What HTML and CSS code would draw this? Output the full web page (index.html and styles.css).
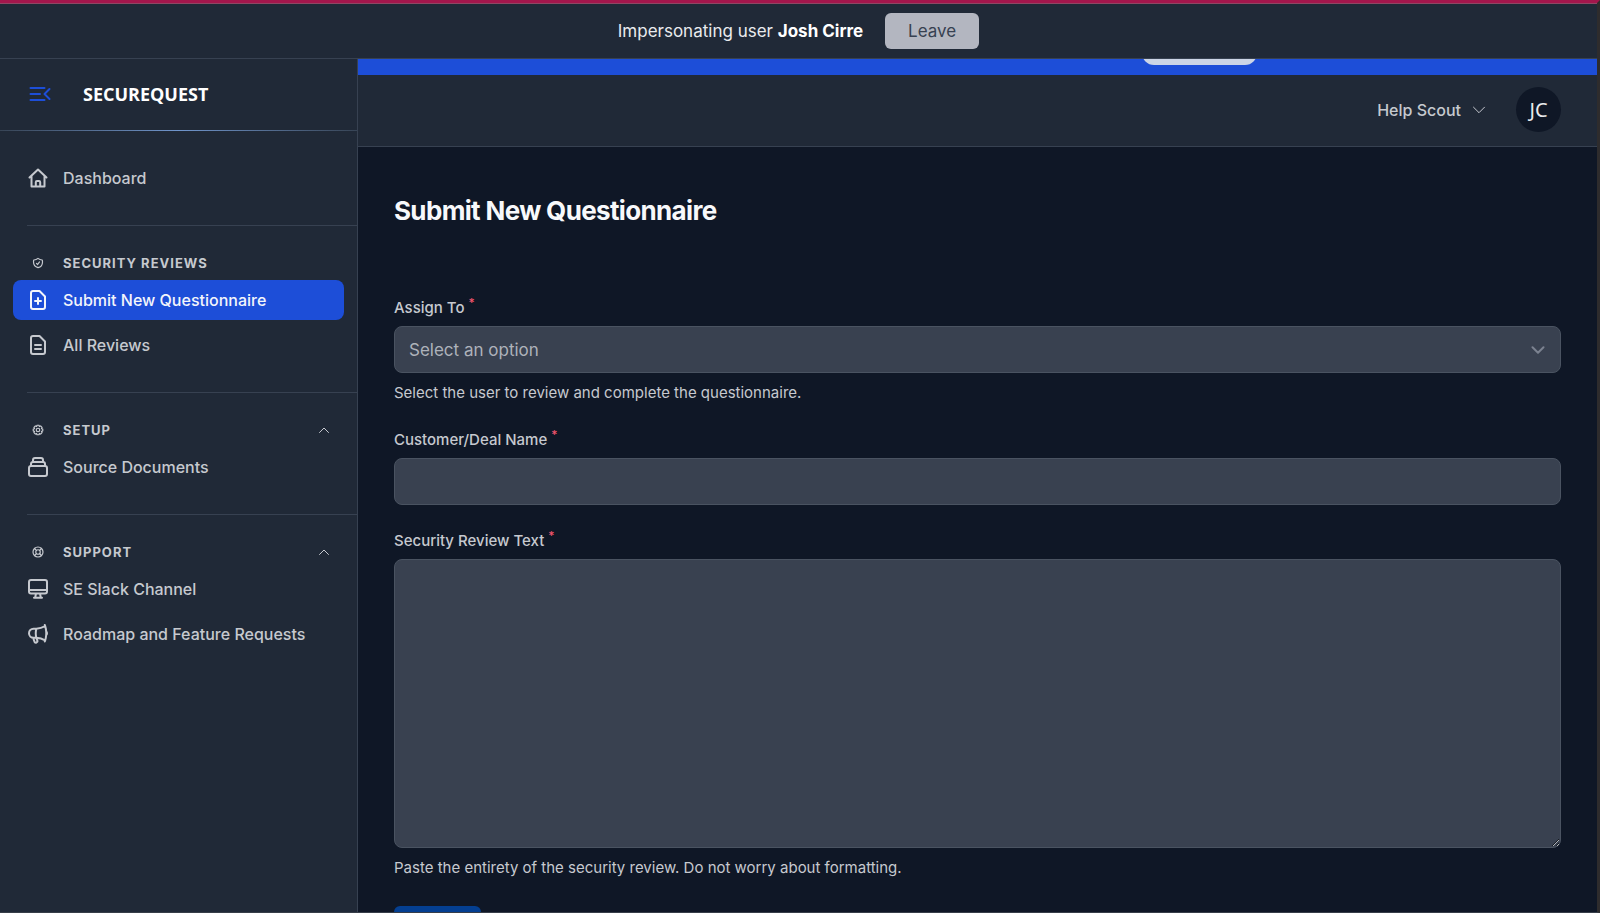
FILE: index.html
```html
<!DOCTYPE html>
<html lang="en">
<head>
<meta charset="utf-8">
<title>SecureQuest - Submit New Questionnaire</title>
<link rel="stylesheet" href="styles.css">
</head>
<body>
<div class="app">
  <div class="impersonation">
    <p class="impersonation-text">Impersonating user <strong>Josh Cirre</strong></p>
    <button type="button" class="leave-button">Leave</button>
  </div>
  <div class="shell">
    <aside class="sidebar">
      <div class="brand">
        <button type="button" class="collapse-button" aria-label="Collapse sidebar">
          <svg class="icon-menu" viewBox="0 0 22 16"><path d="M1.500 2H15.500M1.500 8H11M1.500 14H15.500M20.500 3L15.500 8l5 5"/></svg>
        </button>
        <span class="brand-name">SECUREQUEST</span>
      </div>
      <nav class="nav">
        <div class="nav-group">
          <a href="#" class="nav-item">
            <svg class="icon" viewBox="0 0 20 20"><path d="M1.500 9.500L10 1.500l8.500 8M3.500 8v10.500h13V8M7.800 18.500v-4.300a1.200 1.200 0 0 1 1.200-1.200h2a1.200 1.200 0 0 1 1.200 1.200v4.300"/></svg>
            Dashboard</a>
        </div>
        <div class="nav-group">
          <h2 class="nav-heading">
            <svg class="icon-small" viewBox="0 0 24 24"><path d="M9 12.750 11.250 15 15 9.750m-3-7.036A11.959 11.959 0 0 1 3.598 6 11.990 11.990 0 0 0 3 9.749c0 5.592 3.824 10.290 9 11.623 5.176-1.332 9-6.030 9-11.622 0-1.310-.210-2.571-.598-3.751h-.152c-3.196 0-6.100-1.248-8.250-3.285Z"/></svg>
            Security Reviews</h2>
          <a href="#" class="nav-item nav-item-active" aria-current="page">
            <svg class="icon" viewBox="0 0 20 20"><path d="M5 1h6.500L17 6.500V17a2 2 0 0 1-2 2H5a2 2 0 0 1-2-2V3a2 2 0 0 1 2-2zM10 8v6M7 11h6"/></svg>
            Submit New Questionnaire</a>
          <a href="#" class="nav-item">
            <svg class="icon" viewBox="0 0 20 20"><path d="M5 1h6.500L17 6.500V17a2 2 0 0 1-2 2H5a2 2 0 0 1-2-2V3a2 2 0 0 1 2-2zM7 10h6M7 14h6"/></svg>
            All Reviews</a>
        </div>
        <div class="nav-group">
          <h2 class="nav-heading">
            <svg class="icon-small" viewBox="0 0 24 24"><circle cx="12" cy="12" r="3.500"/><path d="M10 2.500h4l.8 2.600 2.400-1.200 2.900 2.900-1.200 2.400 2.600.8v4l-2.600.8 1.200 2.400-2.900 2.900-2.400-1.200-.8 2.600h-4l-.8-2.600-2.400 1.200-2.900-2.900 1.200-2.400-2.600-.8v-4l2.600-.8-1.200-2.400 2.900-2.900 2.400 1.200z"/></svg>
            <button type="button" class="nav-toggle" aria-expanded="true">Setup
              <svg class="icon-caret" viewBox="0 0 12 8"><path d="M1.500 6.500 6 2l4.500 4.500"/></svg></button></h2>
          <a href="#" class="nav-item">
            <svg class="icon" viewBox="0 0 20 20"><path d="M3 9h14a2 2 0 0 1 2 2v6a2 2 0 0 1-2 2H3a2 2 0 0 1-2-2v-6a2 2 0 0 1 2-2zM3 9V7a2 2 0 0 1 2-2h10a2 2 0 0 1 2 2v2M5 5V3a2 2 0 0 1 2-2h6a2 2 0 0 1 2 2v2"/></svg>
            Source Documents</a>
        </div>
        <div class="nav-group">
          <h2 class="nav-heading">
            <svg class="icon-small" viewBox="0 0 24 24"><circle cx="12" cy="12" r="10"/><circle cx="12" cy="12" r="4.500"/><path d="m5 5 3.800 3.800M15.200 15.200 19 19M19 5l-3.800 3.800M8.800 15.200 5 19"/></svg>
            <button type="button" class="nav-toggle" aria-expanded="true">Support
              <svg class="icon-caret" viewBox="0 0 12 8"><path d="M1.500 6.500 6 2l4.500 4.500"/></svg></button></h2>
          <a href="#" class="nav-item">
            <svg class="icon" viewBox="0 0 20 20"><path d="M3 1h14a2 2 0 0 1 2 2v9.500a2 2 0 0 1-2 2H3a2 2 0 0 1-2-2V3a2 2 0 0 1 2-2zM1 11h18M8 14.500l-.8 4M12 14.500l.8 4M6 18.800h8"/></svg>
            SE Slack Channel</a>
          <a href="#" class="nav-item">
            <svg class="icon" viewBox="2 2 20 20"><path d="M10.340 15.840c-.688-.060-1.386-.090-2.090-.090H7.500a4.500 4.500 0 1 1 0-9h.750c.704 0 1.402-.030 2.090-.090m0 9.180c.253.962.584 1.892.985 2.783.247.550.060 1.210-.463 1.511l-.657.380c-.551.318-1.260.117-1.527-.461a20.845 20.845 0 0 1-1.440-4.282m3.102.069a18.030 18.030 0 0 1-.590-4.590c0-1.586.205-3.124.590-4.590m0 9.180a23.848 23.848 0 0 1 8.835 2.535M10.340 6.660a23.847 23.847 0 0 0 8.835-2.535m0 0A23.740 23.740 0 0 0 18.795 3m.380 1.125a23.910 23.910 0 0 1 1.014 5.395m-1.014 8.855c-.118.380-.245.754-.380 1.125m.380-1.125a23.910 23.910 0 0 0 1.014-5.395m0-3.460c.495.413.811 1.035.811 1.730 0 .695-.316 1.317-.811 1.730m0-3.460a24.347 24.347 0 0 1 0 3.460"/></svg>
            Roadmap and Feature Requests</a>
        </div>
      </nav>
    </aside>
    <div class="content">
      <div class="notice"><span class="notice-pill"></span></div>
      <header class="topbar">
        <button type="button" class="team-button">Help Scout
          <svg class="icon-chevron" viewBox="0 0 14 8"><path d="M1.500 1.200 7 6.700l5.500-5.500"/></svg></button>
        <button type="button" class="avatar">JC</button>
      </header>
      <main class="page">
        <h1 class="page-title">Submit New Questionnaire</h1>
        <form class="form">
          <div class="field">
            <label class="field-label" for="assign">Assign To<sup class="required">*</sup></label>
            <div class="select-wrap">
              <select id="assign" class="control"><option>Select an option</option></select>
              <svg class="select-chevron" viewBox="0 0 14 8"><path d="M1.500 1.200 7 6.700l5.500-5.500"/></svg>
            </div>
            <p class="help">Select the user to review and complete the questionnaire.</p>
          </div>
          <div class="field">
            <label class="field-label" for="customer">Customer/Deal Name<sup class="required">*</sup></label>
            <input id="customer" type="text" class="control">
          </div>
          <div class="field">
            <label class="field-label" for="review">Security Review Text<sup class="required">*</sup></label>
            <textarea id="review" class="control control-area" rows="12"></textarea>
            <p class="help">Paste the entirety of the security review. Do not worry about formatting.</p>
          </div>
          <button type="submit" class="submit-button" aria-label="Submit"></button>
        </form>
      </main>
    </div>
  </div>
</div>
</body>
</html>
```

FILE: styles.css
```css
* { box-sizing: border-box; }

body {
  margin: 0;
  background: #0f1726;
  color: #c6c9cf;
  font-family: Inter, "Liberation Sans", sans-serif;
  font-size: 16px;
  line-height: 22px;
}

h1, h2, p { margin: 0; }
a { color: inherit; text-decoration: none; }

button {
  padding: 0;
  border: 0;
  background: none;
  color: inherit;
  font: inherit;
  cursor: pointer;
}

svg {
  display: block;
  flex: none;
  fill: none;
  stroke: currentColor;
  stroke-linecap: round;
  stroke-linejoin: round;
}

.app {
  display: flex;
  flex-direction: column;
  height: 100vh;
  overflow: hidden;
  border-top: 3px solid #a3164c;
  border-right: 3px solid #2e2c2d;
  border-bottom: 1px solid #373e49;
}

.impersonation {
  display: flex;
  flex: none;
  align-items: center;
  justify-content: center;
  gap: 22px;
  height: 56px;
  border-top: 1px solid #8e4764;
  border-bottom: 1px solid #374151;
  background: #202937;
  color: #e9ebee;
  font-size: 17px;
}

.impersonation-text strong { color: #fff; font-weight: 700; }

.leave-button {
  padding: 7px 23px;
  border-radius: 6px;
  background: #b3b6c0;
  color: #374151;
}

.shell { display: flex; flex: 1; min-height: 0; }

.sidebar {
  flex: none;
  width: 358px;
  border-right: 1px solid #374151;
  background: #202937;
}

.brand {
  display: flex;
  align-items: center;
  gap: 32px;
  height: 72px;
  padding: 0 0 2px 29px;
  border-bottom: 1px solid;
  border-image: linear-gradient(90deg, #374455, #7095cc 50%, #374455) 1;
}

.collapse-button { color: #1d4ed8; }
.icon-menu { width: 22px; height: 16px; stroke-width: 2; }

.brand-name {
  color: #fff;
  font-family: "Open Sans", "Noto Sans", sans-serif;
  font-size: 18px;
  font-weight: 700;
}

.nav-group {
  display: flex;
  flex-direction: column;
  margin-left: 27px;
  padding: 27px 0;
}

.nav-group + .nav-group { border-top: 1px solid #374151; }

.nav-heading {
  display: flex;
  align-items: center;
  gap: 19px;
  height: 20px;
  margin: 0 27px 7px 5px;
  font-size: 13px;
  font-weight: 700;
  letter-spacing: 1px;
  line-height: 20px;
  text-transform: uppercase;
}

.nav-toggle {
  display: flex;
  flex: 1;
  align-items: center;
  justify-content: space-between;
  letter-spacing: inherit;
  text-transform: inherit;
}

.nav-item {
  display: flex;
  align-items: center;
  gap: 15px;
  height: 40px;
  margin: 0 13px 0 -14px;
  padding: 0 15px;
  border-radius: 8px;
  font-weight: 500;
}

.nav-item + .nav-item { margin-top: 5px; }
.nav-item-active { background: #1d4ed8; color: #f3f5fb; }

.icon { width: 20px; height: 20px; stroke-width: 2; }
.icon-small { width: 12px; height: 12px; overflow: visible; stroke-width: 2.4; }
.icon-caret { width: 12px; height: 8px; }

.content { display: flex; flex: 1; flex-direction: column; min-width: 0; overflow: hidden; }

.notice {
  display: flex;
  flex: none;
  justify-content: flex-end;
  height: 16px;
  padding-right: 340px;
  overflow: hidden;
  background: #1d4ed8;
}

.notice-pill {
  width: 115px;
  height: 32px;
  margin-top: -26px;
  border-radius: 12px;
  background: #ccd5e6;
}

.topbar {
  display: flex;
  flex: none;
  align-items: center;
  justify-content: flex-end;
  gap: 30px;
  height: 72px;
  padding: 0 36px 2px 0;
  border-bottom: 1px solid #374151;
  background: #202937;
}

.team-button {
  display: flex;
  align-items: center;
  gap: 11px;
  font-weight: 500;
}

.icon-chevron { width: 14px; height: 8px; }

.avatar {
  width: 45px;
  height: 45px;
  border-radius: 50%;
  background: #0f1726;
  color: #e9ebee;
  font-family: "Noto Sans", sans-serif;
  font-size: 20px;
}

.page { padding: 46px 36px; }

.page-title {
  color: #f8f9fb;
  font-size: 26px;
  font-weight: 700;
  letter-spacing: -0.025em;
  line-height: 36px;
}

.form {
  display: flex;
  flex-direction: column;
  align-items: stretch;
  gap: 25px;
  padding-top: 68px;
}

.field { display: flex; flex-direction: column; }
.field-label { margin-bottom: 7px; font-size: 15px; font-weight: 500; }

.required {
  margin-left: 4px;
  color: #f0546c;
  font-size: 12px;
  line-height: 0;
}

.select-wrap { position: relative; }

.select-chevron {
  position: absolute;
  top: 20px;
  right: 16px;
  width: 14px;
  height: 8px;
  color: #7b8290;
  stroke-width: 2;
  pointer-events: none;
}

.control {
  display: block;
  width: 100%;
  height: 47px;
  padding: 0 14px;
  border: 1px solid #4a5361;
  border-radius: 8px;
  background: #394150;
  color: #aeb2ba;
  font: inherit;
  font-size: 17px;
  appearance: none;
}

.control-area { height: 289px; padding: 12px 14px; resize: vertical; }

.help { margin-top: 9px; font-size: 15px; }

.submit-button {
  width: 87px;
  height: 41px;
  margin-top: 2px;
  border-radius: 6px;
  background: #043f91;
}
```
